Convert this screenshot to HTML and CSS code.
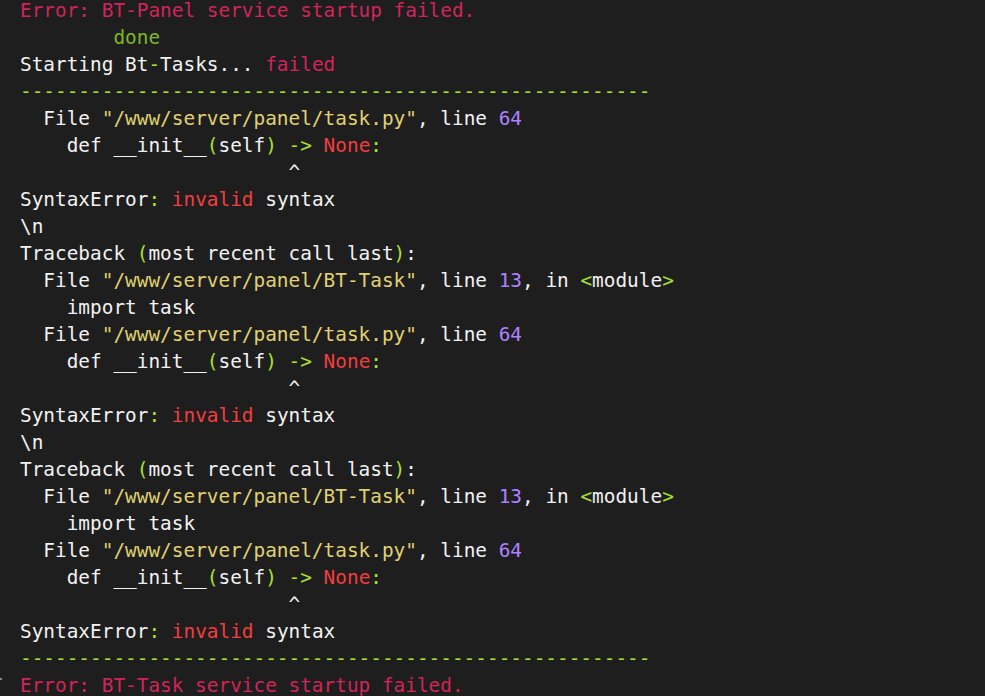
FILE: index.html
```html
<!DOCTYPE html>
<html>
<head>
<meta charset="utf-8">
<link rel="stylesheet" href="styles.css">
</head>
<body>
<div class="term">
<pre class="out"><span class="err">Error: BT-Panel service startup failed.</span>
        <span class="ok">done</span>
Starting Bt<span class="g">-</span>Tasks... <span class="err">failed</span>
<span class="dash">------------------------------------------------------</span>
  File <span class="str">"/www/server/panel/task.py"</span>, line <span class="num">64</span>
    def __init__<span class="g">(</span>self<span class="g">)</span> <span class="g">-&gt;</span> <span class="red">None</span><span class="g">:</span>
                       ^
SyntaxError<span class="g">:</span> <span class="red">invalid</span> syntax
\n
Traceback <span class="g">(</span>most recent call last<span class="g">)</span>:
  File <span class="str">"/www/server/panel/BT-Task"</span>, line <span class="num">13</span>, in <span class="g">&lt;</span>module<span class="g">&gt;</span>
    import task
  File <span class="str">"/www/server/panel/task.py"</span>, line <span class="num">64</span>
    def __init__<span class="g">(</span>self<span class="g">)</span> <span class="g">-&gt;</span> <span class="red">None</span><span class="g">:</span>
                       ^
SyntaxError<span class="g">:</span> <span class="red">invalid</span> syntax
\n
Traceback <span class="g">(</span>most recent call last<span class="g">)</span>:
  File <span class="str">"/www/server/panel/BT-Task"</span>, line <span class="num">13</span>, in <span class="g">&lt;</span>module<span class="g">&gt;</span>
    import task
  File <span class="str">"/www/server/panel/task.py"</span>, line <span class="num">64</span>
    def __init__<span class="g">(</span>self<span class="g">)</span> <span class="g">-&gt;</span> <span class="red">None</span><span class="g">:</span>
                       ^
SyntaxError<span class="g">:</span> <span class="red">invalid</span> syntax
<span class="dash">------------------------------------------------------</span>
<span class="err">Error: BT-Task service startup failed.</span></pre>
<span class="mark"></span>
</div>
</body>
</html>
```
FILE: styles.css
```css
html, body {
  margin: 0;
  padding: 0;
  background: #1e1e1e;
  overflow: hidden;
  height: 100%;
}
.term {
  position: relative;
  height: 100%;
}
.out {
  margin: -3px 0 0 0;
  padding-left: 20px;
  font-family: "DejaVu Sans Mono", "Liberation Mono", monospace;
  font-size: 19.4px;
  line-height: 27px;
  color: #f2f2f2;
}
.err { color: #d2245b; }
.ok { color: #7db726; }
.g { color: #a6e22e; }
.dash { color: #a6e22e; }
.str { color: #e0d271; }
.num { color: #ae81ff; }
.red { color: #f23d3d; }
.mark {
  position: absolute;
  left: 0;
  top: 681px;
  width: 2px;
  height: 2px;
  background: #888;
}
```
